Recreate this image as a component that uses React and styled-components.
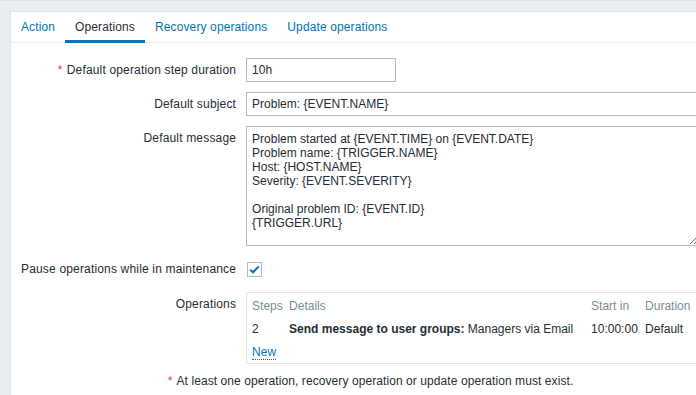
import React from "react";
import { createGlobalStyle, styled } from "styled-components";

const Global = createGlobalStyle`
  html, body {
    margin: 0;
    padding: 0;
    background: #ebeef0;
    overflow: hidden;
  }
  body {
    font-family: "Liberation Sans", Arial, sans-serif;
    font-size: 12px;
    color: #1f2c33;
    border-top: 1px solid #dde3e6;
  }
`;

const Page = styled.div`
  padding: 10px 0 0 10px;
  width: 760px;
`;

const Card = styled.div`
  background: #ffffff;
  border: 1px solid #dfe4e7;
  width: 728px;
  min-height: 400px;
`;

const TabBar = styled.div`
  display: flex;
  border-bottom: 1px solid #ebeef0;
`;

const Tab = styled.div`
  padding: 0 10px;
  height: 31px;
  line-height: 30px;
  margin-bottom: -1px;
  letter-spacing: 0.12px;
  color: ${(p) => (p.$active ? "#1f2c33" : "#0275b8")};
  box-shadow: ${(p) => (p.$active ? "inset 0 -3px 0 #0275b8" : "none")};
  cursor: pointer;
`;

const Form = styled.div`
  display: grid;
  grid-template-columns: max-content 453px;
  column-gap: 10px;
  row-gap: 10px;
  padding: 15px 10px 10px;
`;

const Label = styled.div`
  text-align: right;
  line-height: ${(p) => (p.$tall ? "26px" : "24px")};
  letter-spacing: 0.17px;
  white-space: nowrap;
`;

const Asterisk = styled.span`
  color: #e33734;
  margin-right: 4px;
`;

const Input = styled.input`
  box-sizing: border-box;
  height: 24px;
  width: ${(p) => p.$width || "100%"};
  border: 1px solid #acbbc2;
  padding: 0 5px;
  font-family: inherit;
  font-size: 12px;
  color: #1f2c33;
  outline: none;
`;

const TextArea = styled.textarea`
  box-sizing: border-box;
  display: block;
  width: 100%;
  height: 120px;
  border: 1px solid #acbbc2;
  padding: 5px 5px 4px;
  font-family: inherit;
  font-size: 12px;
  line-height: 14px;
  color: #1f2c33;
  outline: none;
  resize: vertical;
`;

const CheckCell = styled.div`
  display: flex;
  align-items: center;
  height: 26px;
`;

const CheckBox = styled.span`
  box-sizing: border-box;
  width: 15px;
  height: 15px;
  margin-left: 1px;
  border: 1px solid #acbbc2;
  display: flex;
  align-items: center;
  justify-content: center;
  background: #fff;
`;

const OpsBox = styled.div`
  border: 1px solid #dfe4e7;
  padding: 1px 5px 0;
`;

const OpsTable = styled.table`
  border-collapse: collapse;
  table-layout: fixed;
  width: 100%;

  th, td {
    padding: 5px 6px 4px 0;
    line-height: 14px;
    text-align: left;
    white-space: nowrap;
    vertical-align: top;
    overflow: hidden;
  }
  th:last-child, td:last-child {
    padding-right: 0;
  }
  th {
    font-weight: normal;
    color: #768d99;
  }
`;

const Col = styled.col`
  width: ${(p) => p.$w || "auto"};
`;

const LinkNew = styled.a`
  color: #0275b8;
  text-decoration: none;
  border-bottom: 1px dotted #0275b8;
  cursor: pointer;
`;

const Note = styled.div`
  grid-column: 1 / -1;
  text-align: center;
  padding-left: 21px;
  line-height: 14px;
  letter-spacing: 0.08px;
`;

const message = `Problem started at {EVENT.TIME} on {EVENT.DATE}
Problem name: {TRIGGER.NAME}
Host: {HOST.NAME}
Severity: {EVENT.SEVERITY}

Original problem ID: {EVENT.ID}
{TRIGGER.URL}`;

const tabs = ["Action", "Operations", "Recovery operations", "Update operations"];

export default function App() {
  return (
    <>
      <Global />
      <Page>
        <Card>
          <TabBar>
            {tabs.map((t) => (
              <Tab key={t} $active={t === "Operations"}>
                {t}
              </Tab>
            ))}
          </TabBar>
          <Form>
            <Label>
              <Asterisk>*</Asterisk>Default operation step duration
            </Label>
            <div>
              <Input $width="150px" defaultValue="10h" />
            </div>

            <Label>Default subject</Label>
            <div>
              <Input defaultValue="Problem: {EVENT.NAME}" />
            </div>

            <Label>Default message</Label>
            <div>
              <TextArea defaultValue={message} />
            </div>

            <Label $tall>Pause operations while in maintenance</Label>
            <CheckCell>
              <CheckBox>
                <svg width="11" height="9" viewBox="0 0 11 9">
                  <path
                    d="M1.2 4.6 L4 7.3 L9.8 1.4"
                    fill="none"
                    stroke="#0275b8"
                    strokeWidth="2"
                  />
                </svg>
              </CheckBox>
            </CheckCell>

            <Label>Operations</Label>
            <OpsBox>
              <OpsTable>
                <colgroup>
                  <Col $w="37px" />
                  <Col $w="302px" />
                  <Col $w="54px" />
                  <Col />
                </colgroup>
                <thead>
                  <tr>
                    <th>Steps</th>
                    <th>Details</th>
                    <th>Start in</th>
                    <th>Duration</th>
                  </tr>
                </thead>
                <tbody>
                  <tr>
                    <td>2</td>
                    <td>
                      <b>Send message to user groups:</b> Managers via Email
                    </td>
                    <td>10:00:00</td>
                    <td>Default</td>
                  </tr>
                  <tr>
                    <td colSpan={4}>
                      <LinkNew>New</LinkNew>
                    </td>
                  </tr>
                </tbody>
              </OpsTable>
            </OpsBox>

            <Note>
              <Asterisk>*</Asterisk>At least one operation, recovery operation or update operation must exist.
            </Note>
          </Form>
        </Card>
      </Page>
    </>
  );
}
